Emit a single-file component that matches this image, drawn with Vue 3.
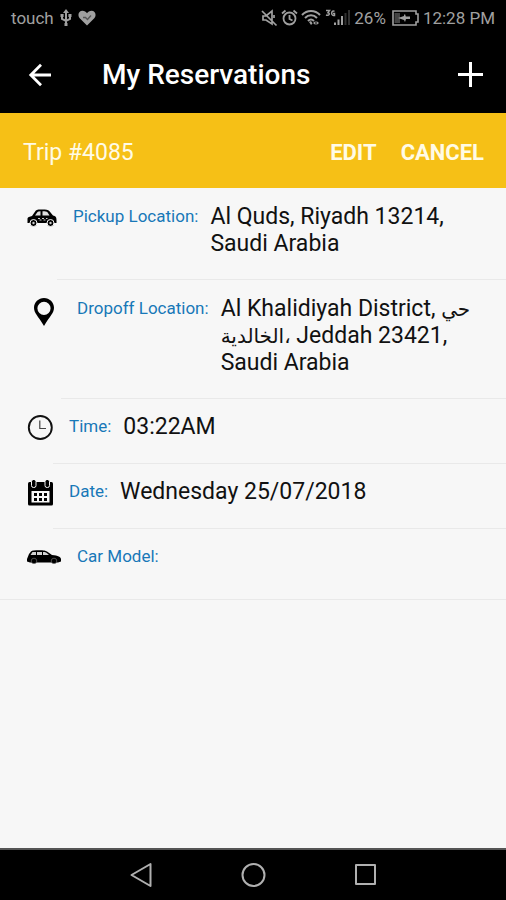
<script setup>
const trip = {
  number: '4085',
  pickup: 'Al Quds, Riyadh 13214, Saudi Arabia',
  dropoff: {
    district: 'Al Khalidiyah District,',
    local: 'حي الخالدية،',
    city: 'Jeddah 23421, Saudi Arabia',
  },
  time: '03:22AM',
  date: 'Wednesday 25/07/2018',
}
const calendarDots = [7, 12, 17].flatMap((x) => [13, 18].map((y) => ({ x, y })))
</script>

<template>
  <div class="screen">
    <div class="status">
      <div class="status-group left">
        <span>touch</span>
        <svg width="12" height="18" viewBox="0 0 12 18" fill="none" stroke="currentColor" stroke-width="2">
          <path d="M6 2v13M2 7v3l4 2 4-2V7" />
          <path d="M6 0l3 4H3zM4.500 14h3v3h-3zM.5 5h3.100v3H.5zM8.400 5h3.100v3H8.400z" fill="currentColor" stroke="none" />
        </svg>
        <svg width="18" height="16" viewBox="0 0 18 16">
          <path d="M9 15.500L1.500 8C-.8 5 .8 .8 4.500 .8 6.500 .8 8 1.800 9 3.200 10 1.800 11.500 .8 13.500 .8c3.700 0 5.300 4.200 3 7.200z" fill="currentColor" />
          <path d="M5 7.500h2.500l2 2L13 5.500" fill="none" stroke="#555" stroke-width="1.300" />
        </svg>
      </div>
      <div class="status-group right">
        <svg width="17" height="18" viewBox="0 0 17 18" fill="none" stroke="currentColor" stroke-width="1.700">
          <path d="M1 2l14.500 14.500M2 7h3l6-5v13l-6-4H2zM13 6v3" />
        </svg>
        <svg width="17" height="18" viewBox="0 0 17 18" fill="none" stroke="currentColor" stroke-width="1.800">
          <circle cx="8.500" cy="9.500" r="6" />
          <path d="M8.500 6v4l3 1.500M1 4.500L4.500 1.500M16 4.500L12.500 1.500" />
        </svg>
        <svg width="20" height="18" viewBox="0 0 20 18" fill="none" stroke="currentColor" stroke-width="2">
          <path d="M1 6c5-5.300 13-5.300 18 0M4 9c3.500-3.600 8.500-3.600 12 0M7 12c2-2 4-2 6 0" />
          <path d="M8 13l2-1 1.500 2.500L10 16zM12 14l2.500-2v4zM15.500 12l2.500 2-2.500 2z" fill="currentColor" stroke="none" />
        </svg>
        <svg width="27" height="20" viewBox="0 0 27 20">
          <path d="M2 2.500h3.500L4 4.700c2.300.3 1.500 3.300-2 2.300M10.500 3.300c-3-1.600-4 3.900-1 4.200h1V5.500H9" fill="none" stroke="currentColor" stroke-width="1.500" />
          <path d="M10 14.500h2V17h-2zM13.500 11.500h2V17h-2zM17 8h2v9h-2z" fill="currentColor" />
          <path d="M20.500 5h2v12h-2zM24 2h2v15h-2z" fill="#303030" />
        </svg>
        <span>26%</span>
        <svg class="battery" width="29" height="16" viewBox="0 0 29 16">
          <path d="M2 1h23v3h2v8h-2v3H2z" fill="none" stroke="currentColor" stroke-width="1.600" />
          <path d="M3.500 3H9v10H3.500z" fill="#444" />
          <path d="M7 8l6-2V5l1-1 .8 2.600H19v2.400h-4L14 12l-1-2z" fill="currentColor" />
        </svg>
        <span>12:28 PM</span>
      </div>
    </div>

    <header class="bar">
      <button class="icon-button" type="button" aria-label="Back">
        <svg width="24" height="24" viewBox="0 0 24 24" fill="none" stroke="currentColor" stroke-width="2.800">
          <path d="M23 12H2.800M13 1.800L2.800 12 13 22.200" />
        </svg>
      </button>
      <h1>My Reservations</h1>
      <button class="icon-button" type="button" aria-label="Add reservation">
        <svg width="26" height="26" viewBox="0 0 26 26" fill="none" stroke="currentColor" stroke-width="3">
          <path d="M12.500 0v25M0 12.500h25" />
        </svg>
      </button>
    </header>

    <section class="trip">
      <h2>Trip #{{ trip.number }}</h2>
      <button class="action" type="button">EDIT</button>
      <button class="action" type="button">CANCEL</button>
    </section>

    <main>
      <dl>
        <div class="row tall">
          <svg class="glyph" width="30" height="18" viewBox="0 0 30 18">
            <path d="M.5 14V10C.5 8 3 7.500 5 7L8.500 2C9.500 .6 11 .5 15 .5s6 .2 7.500 1.700L26 6.500c2.500.5 3.500 1.500 3.500 4.500v3z" />
            <path d="M8 6.500L10.500 3q.5-.8 3-.8v4.300zM15.500 2.200c3 0 4 0 5 1l2 3.300h-7z" fill="#ddd" />
            <path d="M11 9h2v1h-2zM15 9h2v1h-2zM19 9h1.500v1H19zM12.500 10.500h2v1h-2zM16.500 10.500h2v1h-2z" fill="#ccc" />
            <g stroke="#f7f7f7" stroke-width="1">
              <circle cx="6.500" cy="14" r="3.500" />
              <circle cx="23.500" cy="14" r="3.500" />
            </g>
            <circle cx="6.500" cy="14" r="1.200" fill="#ccc" />
            <circle cx="23.500" cy="14" r="1.200" fill="#ccc" />
          </svg>
          <div class="body">
            <dt>Pickup Location:</dt>
            <dd>{{ trip.pickup }}</dd>
          </div>
        </div>
        <div class="row tall">
          <svg class="glyph pin" width="20" height="28" viewBox="0 0 20 28">
            <path fill-rule="evenodd" d="M10 0C4.500 0 0 4.300 0 9.800 0 15 4 18 10 28 16 18 20 15 20 9.800 20 4.300 15.500 0 10 0zm0 3.700a6.600 6.600 0 1 1 0 13.200 6.600 6.600 0 0 1 0-13.200z" />
          </svg>
          <div class="body">
            <dt>Dropoff Location:</dt>
            <dd>{{ trip.dropoff.district }} <span class="arabic" lang="ar">{{ trip.dropoff.local }}</span> {{ trip.dropoff.city }}</dd>
          </div>
        </div>
        <div class="row">
          <svg class="glyph" width="26" height="26" viewBox="0 0 26 26" fill="none" stroke="#111">
            <circle cx="13.300" cy="12.500" r="11.500" stroke-width="1.900" />
            <path d="M12.800 5.500v8H19" stroke-width="1.200" stroke="#444" />
          </svg>
          <div class="body">
            <dt>Time:</dt>
            <dd>{{ trip.time }}</dd>
          </div>
        </div>
        <div class="row">
          <svg class="glyph" width="26" height="26" viewBox="0 0 26 26">
            <rect x="1" y="2" width="25" height="23.500" rx="1.500" />
            <rect x="4.500" y="11" width="18" height="11.500" fill="#f7f7f7" />
            <g stroke="#f7f7f7" stroke-width="1">
              <rect x="4.500" y="-.5" width="4.500" height="8" rx="2" />
              <rect x="18" y="-.5" width="4.500" height="8" rx="2" />
            </g>
            <rect v-for="d in calendarDots" :key="`${d.x}-${d.y}`" :x="d.x" :y="d.y" width="3" height="3" />
          </svg>
          <div class="body">
            <dt>Date:</dt>
            <dd>{{ trip.date }}</dd>
          </div>
        </div>
        <div class="row last">
          <svg class="glyph" width="34" height="14" viewBox="0 0 34 14">
            <path d="M0 11.500V9L2 4 4 1.500C5 .5 8 .3 12 .3c5 0 6.500.3 8 1.200L25 5c6 .7 9 1.700 9 4.500v2l-3 1H3z" />
            <path d="M3.500 5L5.500 2H9v3zM10 2h5v3h-5zM16 2c2.500 0 3.500.5 6 3h-6z" fill="#d4d4d4" />
            <g stroke="#999" stroke-width=".5">
              <circle cx="7" cy="11" r="2.800" />
              <circle cx="27" cy="11" r="2.800" />
            </g>
          </svg>
          <div class="body">
            <dt>Car Model:</dt>
            <dd></dd>
          </div>
        </div>
      </dl>
    </main>

    <nav class="system">
      <button type="button" aria-label="Back">
        <svg width="26" height="26" viewBox="0 0 26 26"><path d="M22.500 2v22L3.500 13z" /></svg>
      </button>
      <button type="button" aria-label="Home">
        <svg width="26" height="26" viewBox="0 0 26 26"><circle cx="13.500" cy="13" r="11" /></svg>
      </button>
      <button type="button" aria-label="Recent apps">
        <svg width="26" height="26" viewBox="0 0 26 26"><rect x="4" y="3" width="19" height="19" /></svg>
      </button>
    </nav>
  </div>
</template>

<style>
body {
  margin: 0;
  background: #f7f7f7;
}
</style>

<style scoped>
.screen {
  min-height: 100vh;
  display: flex;
  flex-direction: column;
  background: #f7f7f7;
  font-family: Roboto, "Noto Sans", "DejaVu Sans", sans-serif;
  color: #111;
}
button {
  padding: 0;
  border: 0;
  background: none;
  color: inherit;
  font: inherit;
  cursor: pointer;
}
svg {
  display: block;
  flex: none;
}
.status {
  display: flex;
  justify-content: space-between;
  align-items: center;
  height: 36px;
  padding: 0 11px;
  background: #000;
  color: #a0a0a0;
  font-size: 17px;
}
.status-group {
  display: flex;
  align-items: center;
}
.left {
  gap: 6px;
}
.right {
  gap: 3px;
}
.battery {
  margin-left: 2px;
}
.bar {
  display: flex;
  align-items: center;
  height: 77px;
  padding: 0 22px 0 28px;
  background: #000;
  color: #fff;
}
.bar h1 {
  flex: 1;
  margin: 0 0 0 50px;
  font-size: 28px;
  font-weight: 500;
  line-height: 36px;
}
.trip {
  display: flex;
  align-items: center;
  gap: 24px;
  box-sizing: border-box;
  height: 75px;
  padding: 3px 22px 0 23px;
  background: #f6c016;
  color: #fffbe6;
}
.trip h2 {
  flex: 1;
  margin: 0;
  font-size: 23px;
  font-weight: 400;
}
.action {
  font-size: 22px;
  font-weight: 700;
}
main {
  flex: 1;
}
dl {
  margin: 0;
  border-bottom: 1px solid #e9e9e9;
}
.row {
  display: flex;
  align-items: flex-start;
  padding-left: 27px;
}
.glyph {
  margin-top: 16px;
}
.tall .glyph,
.last .glyph {
  margin-top: 21px;
}
.tall .pin {
  margin: 18px 7px 0;
}
.body {
  flex: 1;
  display: flex;
  align-items: flex-start;
  gap: 12px;
  padding: 14px 24px 23px 0;
  border-bottom: 1px solid #e9e9e9;
}
.tall .body {
  padding: 15px 24px 22px 0;
}
.last .body {
  padding-bottom: 29px;
  border-bottom: 0;
}
dt {
  flex: none;
  padding-left: 16px;
  color: #1878b8;
  font-size: 17px;
  line-height: 27px;
}
dd {
  margin: 0;
  font-size: 23px;
  line-height: 27px;
}
.arabic {
  font-size: 20px;
  line-height: 20px;
}
.system {
  display: flex;
  height: 50px;
  padding: 0 85px;
  border-top: 2px solid #555;
  background: #000;
}
.system button {
  flex: 1;
  display: grid;
  place-items: center;
}
.system svg {
  fill: none;
  stroke: #b0b0b0;
  stroke-width: 2;
  stroke-linejoin: round;
}
</style>
